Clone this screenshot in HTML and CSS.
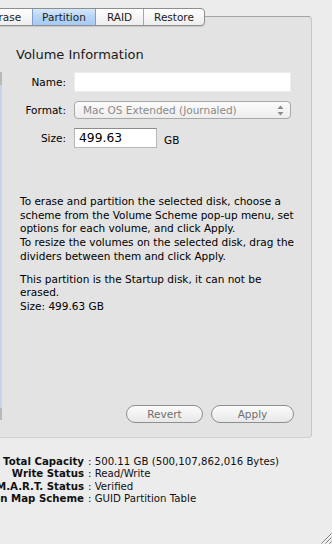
FILE: index.html
```html
<!DOCTYPE html>
<html lang="en">
<head>
    <meta charset="UTF-8">
    <meta name="viewport" content="width=device-width, initial-scale=1.0">
    <title>Partition</title>
    <link rel="stylesheet" href="styles.css">
</head>
<body>
  <div class="tabs">
    <div class="tab tab-firstaid">First Aid</div>
    <div class="tab tab-erase">Erase</div>
    <div class="tab tab-partition selected">Partition</div>
    <div class="tab tab-raid">RAID</div>
    <div class="tab tab-restore">Restore</div>
  </div>

  <div class="panel">
    <div class="scheme"></div>

    <div class="volume">
      <h2>Volume Information</h2>

      <div class="fields">
        <label for="name">Name:</label>
        <input type="text" id="name" class="field field-name" disabled>

        <label>Format:</label>
        <div class="popup">
          <span>Mac OS Extended (Journaled)</span>
          <svg class="arrows" width="7" height="11" viewBox="0 0 7 11">
            <path d="M3.5 0.5 L6.5 4 L0.5 4 Z" fill="#8a8a8a"/>
            <path d="M3.5 10.5 L6.5 7 L0.5 7 Z" fill="#8a8a8a"/>
          </svg>
        </div>

        <label for="size">Size:</label>
        <div class="size-row">
          <input type="text" id="size" class="field field-size" value="499.63">
          <span class="unit">GB</span>
        </div>
      </div>

      <div class="help">
        <p>To erase and partition the selected disk, choose a<br>
        scheme from the Volume Scheme pop-up menu, set<br>
        options for each volume, and click Apply.<br>
        To resize the volumes on the selected disk, drag the<br>
        dividers between them and click Apply.</p>
        <p>This partition is the Startup disk, it can not be<br>
        erased.<br>
        Size: 499.63 GB</p>
      </div>

      <div class="actions">
        <button class="btn btn-revert">Revert</button>
        <button class="btn btn-apply">Apply</button>
      </div>
    </div>
  </div>

  <div class="bottom">
    <div class="info">
      <span class="info-label">Total Capacity</span><span class="info-value">: 500.11 GB (500,107,862,016 Bytes)</span>
      <span class="info-label">Write Status</span><span class="info-value">: Read/Write</span>
      <span class="info-label">S.M.A.R.T. Status</span><span class="info-value">: Verified</span>
      <span class="info-label">Partition Map Scheme</span><span class="info-value">: GUID Partition Table</span>
    </div>
    <svg class="grip" width="12" height="12" viewBox="0 0 12 12">
      <path d="M11.5 1.5 L1.5 11.5 M11.5 5.5 L5.5 11.5 M11.5 9.5 L9.5 11.5" stroke="#7a7a7a" stroke-width="1"/>
      <path d="M11.5 2.5 L2.5 11.5 M11.5 6.5 L6.5 11.5" stroke="#ffffff" stroke-width="1"/>
    </svg>
  </div>
</body>
</html>
```

FILE: styles.css
```css
/* Disk Utility - partition pane */
* {
  box-sizing: border-box;
}

html {
  background: #ececec;
}

body {
  margin: 0;
  width: 332px;
  height: 544px;
  overflow: hidden;
  background: #ececec;
  font-family: "Lucida Grande", "DejaVu Sans", sans-serif;
  font-size: 10.5px;
  color: #000;
  display: flex;
  flex-direction: column;
}

/* segmented tabs */
.tabs {
  position: relative;
  z-index: 1;
  display: flex;
  align-self: flex-start;
  flex-shrink: 0;
  height: 18px;
  margin: 8px 0 0 -83px;
  border: 1px solid #8e8e8e;
  border-radius: 4px;
  overflow: hidden;
  background: linear-gradient(#fefefe, #ededed);
  box-shadow: 0 1px 1px rgba(0, 0, 0, 0.12);
}

.tab {
  display: flex;
  align-items: center;
  justify-content: center;
  color: #1c1c1c;
  border-left: 1px solid #a7a7a7;
}

.tab-firstaid { width: 62px; border-left: none; }
.tab-erase { width: 52px; }
.tab-partition { width: 64px; }
.tab-raid { width: 47px; }
.tab-restore { width: 61px; }

.tab.selected {
  background: linear-gradient(#d7e7fa, #b3d3f5 55%, #a6cbf3);
  border-left-color: #7f9ecb;
  border-right: 1px solid #7f9ecb;
}

.tab.selected + .tab {
  border-left: none;
}

/* tab box */
.panel {
  display: flex;
  flex-shrink: 0;
  width: 332px;
  height: 422px;
  margin: -10px 0 0 -20px;
  border: 1px solid #a3a3a3;
  border-color: #a3a3a3 #c6c6c6 #d0d0d0;
  border-radius: 4px;
  background: #e3e3e3;
}

.scheme {
  width: 2px;
  height: 348px;
  margin: 55px 0 0 19px;
  border-top: 13px solid #bababa;
  border-bottom: 12px solid #bababa;
  background: #c4d5ea;
}

.volume {
  flex: 1;
  display: flex;
  flex-direction: column;
  margin-left: 14px;
  padding: 30px 17px 14px 0;
}

h2 {
  margin: 0;
  font-size: 13px;
  font-weight: normal;
  line-height: 16px;
  color: #1a1a1a;
}

.fields {
  display: grid;
  grid-template-columns: 50px 217px;
  column-gap: 8px;
  row-gap: 9px;
  align-items: center;
  margin-top: 9px;
}

.fields label {
  text-align: right;
}

.field {
  font-family: inherit;
  margin: 0;
  outline: none;
  background: #fff;
}

.field-name {
  width: 217px;
  height: 20px;
  border: 1px solid #ececec;
}

.popup {
  display: flex;
  align-items: center;
  justify-content: space-between;
  height: 18px;
  padding: 0 6px 0 8px;
  border: 1px solid #a9a9a9;
  border-radius: 4px;
  background: linear-gradient(#fbfbfb, #ededed);
  color: #8a8a8a;
}

.size-row {
  display: flex;
  align-items: center;
  gap: 7px;
}

.field-size {
  width: 83px;
  height: 20px;
  padding: 0 4px;
  font-size: 12.3px;
  color: #000;
  border: 1px solid #b8b8b8;
  border-top-color: #8c8c8c;
}

.unit {
  padding-top: 3px;
}

.help {
  margin: 47px 0 0 4px;
  line-height: 13.7px;
}

.help p {
  margin: 0;
}

.help p + p {
  margin-top: 9px;
}

.actions {
  display: flex;
  justify-content: flex-end;
  gap: 8px;
  margin-top: auto;
}

.btn {
  height: 18px;
  padding: 0;
  border: 1px solid #8f8f8f;
  border-radius: 9px;
  background: linear-gradient(#fbfbfb, #e8e8e8);
  font-family: inherit;
  font-size: 10.5px;
  color: #6f6f6f;
}

.btn-revert { width: 77px; }
.btn-apply { width: 83px; }

/* disk info + resize grip */
.bottom {
  flex: 1 0 auto;
  display: flex;
  justify-content: space-between;
  padding-top: 18px;
}

.info {
  display: grid;
  grid-template-columns: 130px auto;
  align-self: flex-start;
  margin-left: -46px;
  font-size: 10.2px;
  line-height: 12.4px;
  color: #111;
}

.info-label {
  text-align: right;
  font-weight: bold;
  white-space: nowrap;
}

.info-value {
  padding-left: 4px;
  white-space: nowrap;
}

.grip {
  display: block;
  align-self: flex-end;
  flex-shrink: 0;
}
```
